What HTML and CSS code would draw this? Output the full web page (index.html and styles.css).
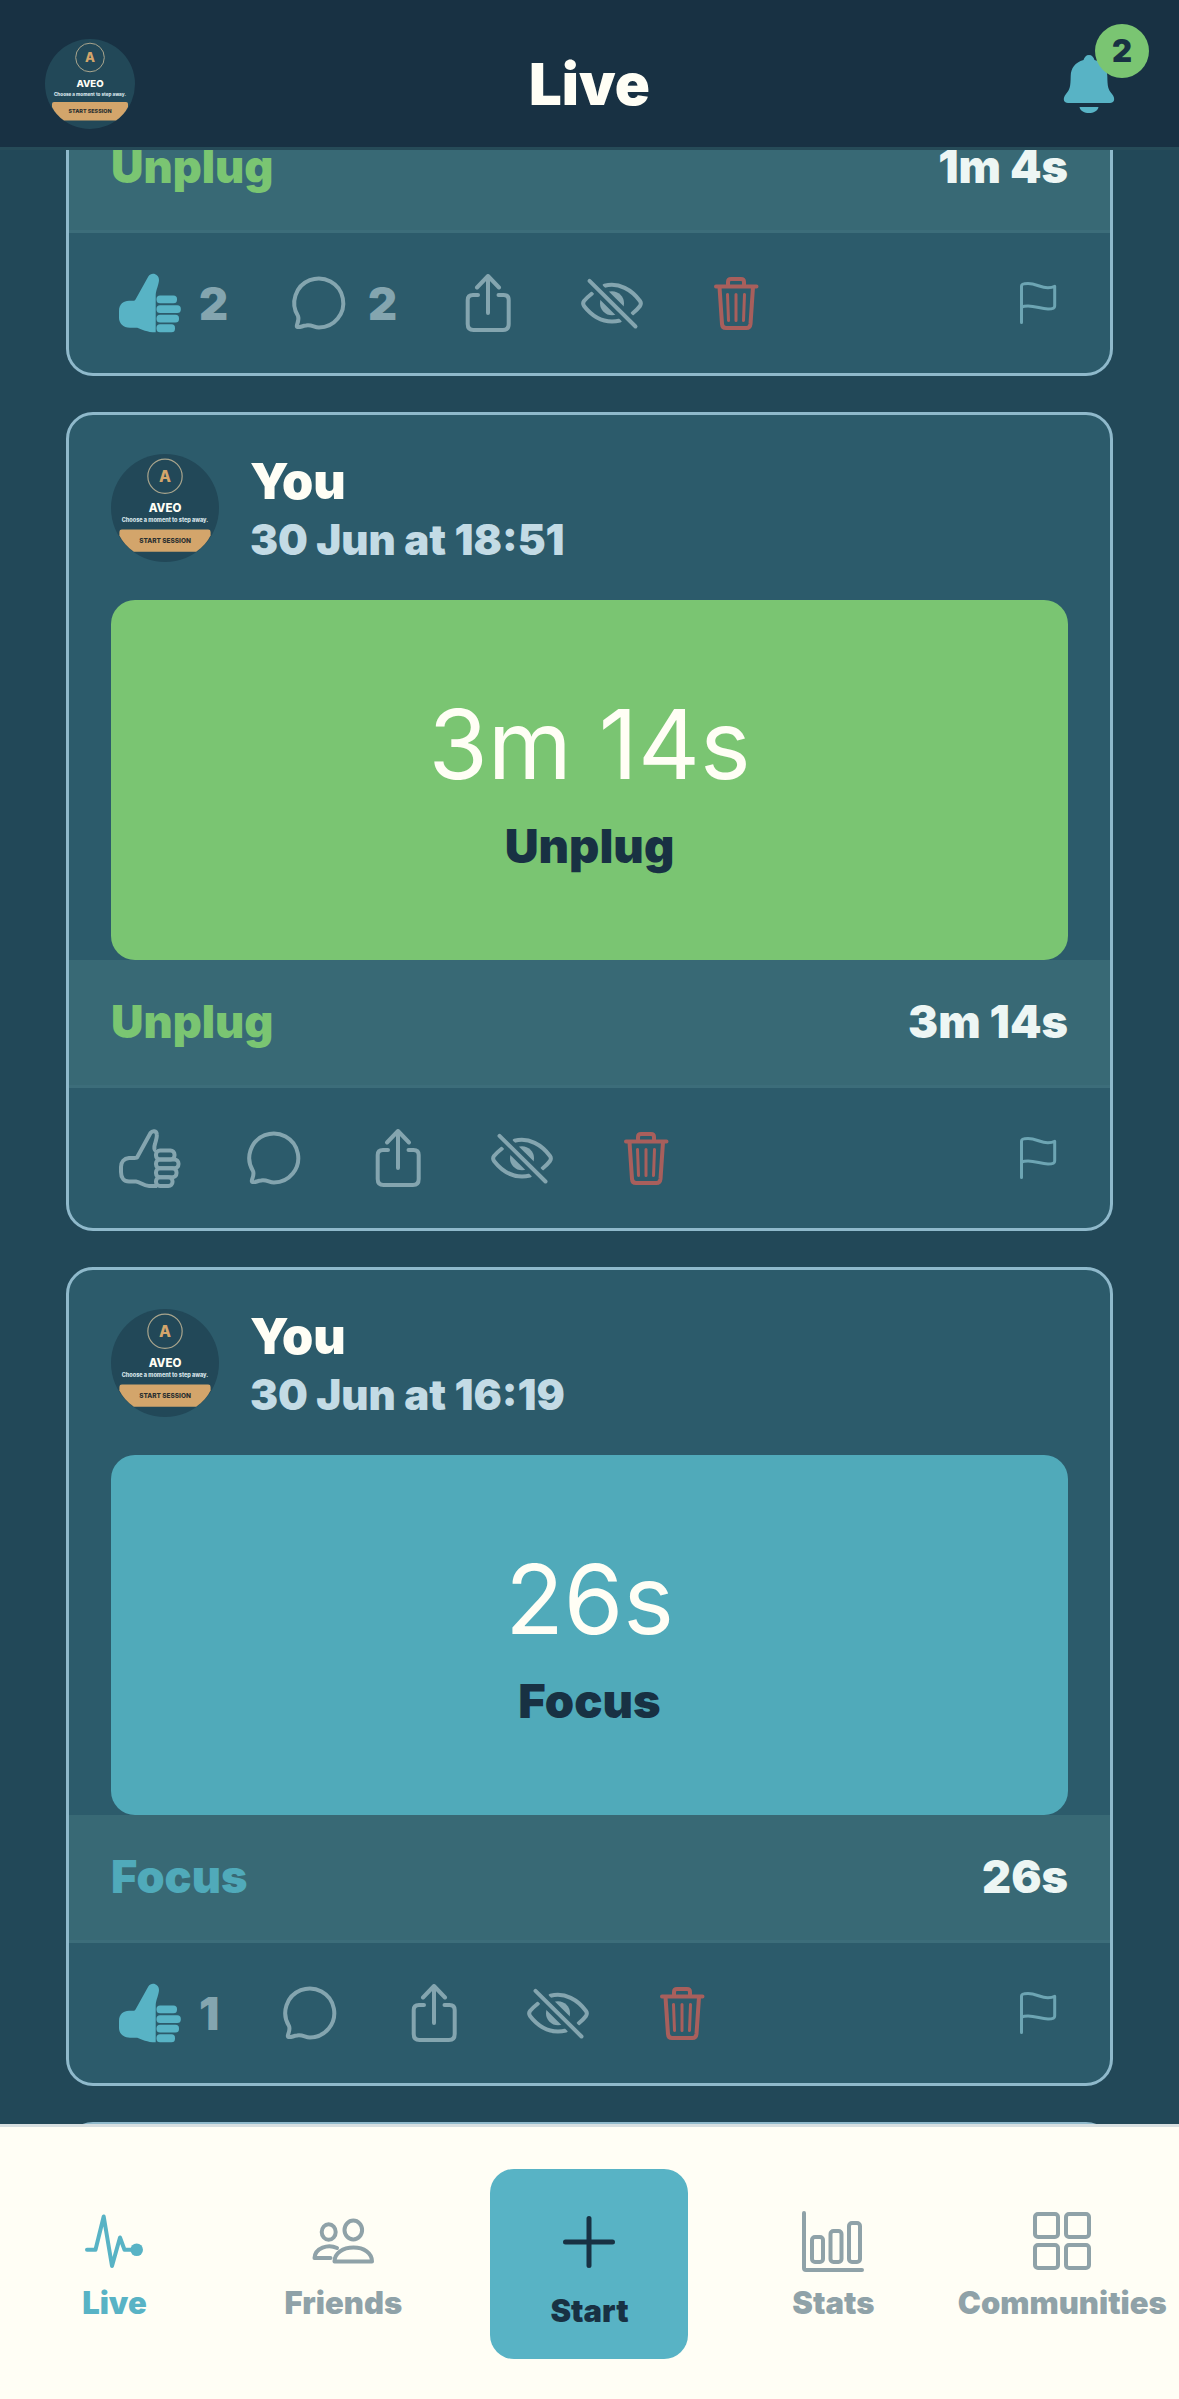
FILE: index.html
```html
<!DOCTYPE html>
<html lang="en">
<head>
  <meta charset="UTF-8" />
  <meta name="viewport" content="width=device-width, initial-scale=1.0"/>
  <title>Aveo – Live</title>
  <link rel="stylesheet" href="styles.css">
</head>
<body>

  <!-- Icons -->
  <svg class="sprite" aria-hidden="true">
    <symbol id="i-like-on" viewBox="0 0 66 66">
      <path fill="currentColor" d="M31.300 6.500C34.500 1.500 42 4 42 10C42 14 39 20 38.700 25V62.300C30 62.300 25 59.500 20.300 57.700H13C6 57.700 2 53 2 48V41C2 34 6.500 30.700 12 30.700H16C17.500 30.700 18 30.500 18.500 29.500Z"/>
      <rect x="39.500" y="25.500" width="20.500" height="7.800" rx="3.500" fill="currentColor"/>
      <rect x="39.500" y="35.200" width="24.300" height="7.800" rx="3.500" fill="currentColor"/>
      <rect x="39.500" y="44.800" width="22.500" height="7.800" rx="3.500" fill="currentColor"/>
      <rect x="39.500" y="54.200" width="18.500" height="8" rx="3.500" fill="currentColor"/>
    </symbol>
    <symbol id="i-like" viewBox="0 0 66 66">
      <g fill="none" stroke="currentColor" stroke-width="4" stroke-linejoin="round">
        <path d="M39 25.500C37 25 37 22 38 19C39.500 14 40 11 39.800 9.500C39.500 5.500 35.500 5.300 33.500 8L20 32.500C19 33.300 15 33 12 33C7 33.500 4 37 4 42V47C4 53 7 56.500 12 56.500H19C23 57 27 61 32 61H40"/>
        <rect x="39" y="25.500" width="18.500" height="8.900" rx="4"/>
        <rect x="39" y="34.400" width="22.500" height="8.900" rx="4"/>
        <rect x="39" y="43.300" width="20.500" height="8.900" rx="4"/>
        <rect x="39" y="52.200" width="16.500" height="8.900" rx="4"/>
      </g>
    </symbol>
    <symbol id="i-comment" viewBox="0 0 66 66">
      <path fill="none" stroke="currentColor" stroke-width="4" stroke-linejoin="round" d="M12 46A24.500 24.500 0 1 1 33 57.500C28 57.500 26 54.500 20 55.500C16 56 13 58 11 56.800C9.500 55.500 14 51 12 46Z"/>
    </symbol>
    <symbol id="i-share" viewBox="0 0 66 66">
      <path fill="none" stroke="currentColor" stroke-width="4" stroke-linecap="round" stroke-linejoin="round" d="M33 43V6M22 17.500L33 6L44 17.500M23 25H18Q12.700 25 12.700 30V54Q12.700 60 18.500 60H48Q53.700 60 53.700 54V30Q53.700 25 48.500 25H43.500"/>
    </symbol>
    <symbol id="i-hide" viewBox="0 0 66 66">
      <path fill="none" stroke="currentColor" stroke-width="4" stroke-linecap="round" stroke-linejoin="round" d="M13 23.500Q8.500 27 5 31Q3.300 33.300 5 36C12 45 22 51.500 33 51.500Q37 51.500 41 50.500M25.500 15.800C40 12 53 20 61 31Q62.700 33.300 61 36Q58 40 53.500 43.500"/>
      <circle cx="33" cy="33.300" r="12" fill="currentColor"/>
      <path stroke="#2c5b6b" stroke-width="12" d="M14 14.300L53 53"/>
      <path stroke="currentColor" stroke-width="4" stroke-linecap="round" d="M10.500 10.800L56.500 56.500"/>
    </symbol>
    <symbol id="i-trash" viewBox="0 0 66 66">
      <g fill="none" stroke="currentColor" stroke-width="4" stroke-linecap="round" stroke-linejoin="round">
        <path d="M13 16.500H53.500M25 16V12Q25 9 28 9H38Q41 9 41 12V16M16.500 17L19 54Q19.300 58 23 58H43.500Q47 58 47.500 54L50 17"/>
        <path stroke-width="3" d="M24.500 24.500L25.500 50.500M33 24.500V50.500M41.500 24.500L40.500 50.500"/>
      </g>
    </symbol>
    <symbol id="i-flag" viewBox="0 0 60 60">
      <path fill="none" stroke="currentColor" stroke-width="3" stroke-linecap="round" stroke-linejoin="round" d="M13.500 49.500V13Q13.500 10.500 20 10.500C28 10.500 33 15 40 14.800Q44 14.500 46.700 13.300V33Q46.700 36 40 36C33 36 28 33 20 33Q16 33 13.500 34"/>
    </symbol>
    <symbol id="i-bell" viewBox="0 0 60 66">
      <path fill="currentColor" d="M30 4C33 4 34.500 6 35.500 9C44 11.500 48 17 48.300 25C48.500 36 49 38 53 43C57 48 55 52 51 52H9C5 52 3 48 7 43C11 38 11.500 36 11.700 25C12 17 16 11.500 24.500 9C25.500 6 27 4 30 4ZM20.500 56H39.500C38 64 22 64 20.500 56Z"/>
    </symbol>
    <symbol id="i-live" viewBox="0 0 66 66">
      <path fill="none" stroke="currentColor" stroke-width="4" stroke-linecap="round" stroke-linejoin="round" d="M6 41.700H14.500L22.700 8.500L31 58L39 29.500L43.500 41.700H56"/>
      <circle cx="55.700" cy="41.700" r="6.300" fill="currentColor"/>
    </symbol>
    <symbol id="i-friends" viewBox="0 0 66 66">
      <g fill="none" stroke="currentColor" stroke-width="4" stroke-linecap="round" stroke-linejoin="round">
        <ellipse cx="18.700" cy="24" rx="7" ry="7.800"/>
        <ellipse cx="43.300" cy="22" rx="8.800" ry="9.500"/>
        <path d="M24.500 53.500C24.500 45 33 39.500 43.500 39.500S62 45 62 53.500Z"/>
        <path d="M27 40C18 35.500 5 40 4.500 50H20.500"/>
      </g>
    </symbol>
    <symbol id="i-plus" viewBox="0 0 66 66">
      <path stroke="currentColor" stroke-width="5" stroke-linecap="round" d="M33 9.500V56.500M9.500 33H56.500"/>
    </symbol>
    <symbol id="i-stats" viewBox="0 0 66 66">
      <g fill="none" stroke="currentColor" stroke-width="4" stroke-linecap="round" stroke-linejoin="round">
        <path d="M4 5V60Q4 62 6 62H62"/>
        <rect x="12" y="29" width="11" height="25" rx="3"/>
        <rect x="30.500" y="23" width="11" height="31" rx="3"/>
        <rect x="49" y="15" width="11" height="39" rx="3"/>
      </g>
    </symbol>
    <symbol id="i-grid" viewBox="0 0 66 66">
      <g fill="none" stroke="currentColor" stroke-width="4">
        <rect x="6" y="6" width="23" height="23" rx="3"/>
        <rect x="37" y="6" width="23" height="23" rx="3"/>
        <rect x="6" y="37" width="23" height="23" rx="3"/>
        <rect x="37" y="37" width="23" height="23" rx="3"/>
      </g>
    </symbol>
  </svg>

  <header class="topbar">
    <button class="profile" aria-label="Profile">
      <svg class="avatar avatar-small" viewBox="0 0 90 90">
        <circle cx="45" cy="45" r="45" fill="#224858"/>
        <circle cx="45" cy="18.5" r="14.3" fill="none" stroke="#a9a58d"/>
        <text x="45" y="23.3" font-size="13" fill="#d3a56b">A</text>
        <text x="45" y="48" font-size="9.6" fill="#fffef5">AVEO</text>
        <text x="45" y="57" font-size="4.6" fill="#d5e3e8">Choose a moment to step away.</text>
        <path d="M9 63H81Q83 63 83 65V68Q79 76 71 81.5H19Q11 76 7 68V65Q7 63 9 63Z" fill="#d3a56b"/>
        <text x="45" y="74.3" font-size="5.4" fill="#2a2f30">START SESSION</text>
      </svg>
    </button>
    <h1>Live</h1>
    <button class="bell" aria-label="Notifications">
      <svg><use href="#i-bell"/></svg>
      <span class="badge">2</span>
    </button>
  </header>

  <main class="feed">
    <!-- scrolled partly under the top bar -->
    <article class="card card-cut">
      <div class="info">
        <span class="unplug">Unplug</span>
        <span>1m 4s</span>
      </div>
      <div class="actions">
        <button class="liked" aria-label="Like"><svg><use href="#i-like-on"/></svg><span>2</span></button>
        <button aria-label="Comment"><svg><use href="#i-comment"/></svg><span>2</span></button>
        <button aria-label="Share"><svg><use href="#i-share"/></svg></button>
        <button aria-label="Hide"><svg><use href="#i-hide"/></svg></button>
        <button class="delete" aria-label="Delete"><svg><use href="#i-trash"/></svg></button>
        <button class="flag" aria-label="Report"><svg><use href="#i-flag"/></svg></button>
      </div>
    </article>

    <article class="card">
      <div class="card-head">
        <svg class="avatar" viewBox="0 0 90 90">
          <circle cx="45" cy="45" r="45" fill="#224858"/>
          <circle cx="45" cy="18.5" r="14.3" fill="none" stroke="#a9a58d"/>
          <text x="45" y="23.3" font-size="13" fill="#d3a56b">A</text>
          <text x="45" y="48" font-size="9.6" fill="#fffef5">AVEO</text>
          <text x="45" y="57" font-size="4.6" fill="#d5e3e8">Choose a moment to step away.</text>
          <path d="M9 63H81Q83 63 83 65V68Q79 76 71 81.5H19Q11 76 7 68V65Q7 63 9 63Z" fill="#d3a56b"/>
          <text x="45" y="74.3" font-size="5.4" fill="#2a2f30">START SESSION</text>
        </svg>
        <div>
          <h2>You</h2>
          <time>30 Jun at 18:51</time>
        </div>
      </div>
      <div class="hero hero-unplug">
        <p class="duration">3m 14s</p>
        <p class="mode">Unplug</p>
      </div>
      <div class="info">
        <span class="unplug">Unplug</span>
        <span>3m 14s</span>
      </div>
      <div class="actions">
        <button aria-label="Like"><svg><use href="#i-like"/></svg></button>
        <button aria-label="Comment"><svg><use href="#i-comment"/></svg></button>
        <button aria-label="Share"><svg><use href="#i-share"/></svg></button>
        <button aria-label="Hide"><svg><use href="#i-hide"/></svg></button>
        <button class="delete" aria-label="Delete"><svg><use href="#i-trash"/></svg></button>
        <button class="flag" aria-label="Report"><svg><use href="#i-flag"/></svg></button>
      </div>
    </article>

    <article class="card">
      <div class="card-head">
        <svg class="avatar" viewBox="0 0 90 90">
          <circle cx="45" cy="45" r="45" fill="#224858"/>
          <circle cx="45" cy="18.5" r="14.3" fill="none" stroke="#a9a58d"/>
          <text x="45" y="23.3" font-size="13" fill="#d3a56b">A</text>
          <text x="45" y="48" font-size="9.6" fill="#fffef5">AVEO</text>
          <text x="45" y="57" font-size="4.6" fill="#d5e3e8">Choose a moment to step away.</text>
          <path d="M9 63H81Q83 63 83 65V68Q79 76 71 81.5H19Q11 76 7 68V65Q7 63 9 63Z" fill="#d3a56b"/>
          <text x="45" y="74.3" font-size="5.4" fill="#2a2f30">START SESSION</text>
        </svg>
        <div>
          <h2>You</h2>
          <time>30 Jun at 16:19</time>
        </div>
      </div>
      <div class="hero hero-focus">
        <p class="duration">26s</p>
        <p class="mode">Focus</p>
      </div>
      <div class="info">
        <span class="focus">Focus</span>
        <span>26s</span>
      </div>
      <div class="actions">
        <button class="liked" aria-label="Like"><svg><use href="#i-like-on"/></svg><span>1</span></button>
        <button aria-label="Comment"><svg><use href="#i-comment"/></svg></button>
        <button aria-label="Share"><svg><use href="#i-share"/></svg></button>
        <button aria-label="Hide"><svg><use href="#i-hide"/></svg></button>
        <button class="delete" aria-label="Delete"><svg><use href="#i-trash"/></svg></button>
        <button class="flag" aria-label="Report"><svg><use href="#i-flag"/></svg></button>
      </div>
    </article>

    <article class="card card-next"></article>
  </main>

  <nav class="tabbar">
    <a href="#live" class="tab active"><svg><use href="#i-live"/></svg>Live</a>
    <a href="#friends" class="tab"><svg><use href="#i-friends"/></svg>Friends</a>
    <button class="start"><svg><use href="#i-plus"/></svg>Start</button>
    <a href="#stats" class="tab"><svg><use href="#i-stats"/></svg>Stats</a>
    <a href="#communities" class="tab"><svg><use href="#i-grid"/></svg>Communities</a>
  </nav>

</body>
</html>
```

FILE: styles.css
```css
:root {
  --navy: #183143;
  --bg: #224858;
  --card: #2c5b6b;
  --info: #386975;
  --line: #3c6d7a;
  --border: #8fb9cb;
  --cream: #fffef5;
  --green: #7ac572;
  --blue: #58b3c5;
  --focus: #50aaba;
  --muted: #84a5af;
}

* {
  box-sizing: border-box;
}

body {
  margin: 0;
  height: 100vh;
  display: flex;
  flex-direction: column;
  overflow: hidden;
  background: var(--bg);
  color: var(--cream);
  font-family: Inter, "Liberation Sans", sans-serif;
  font-weight: 900;
}

h1, h2, p {
  margin: 0;
}

button {
  font: inherit;
  color: inherit;
  background: none;
  border: none;
  padding: 0;
  cursor: pointer;
}

svg {
  display: block;
  flex: none;
}

.sprite {
  position: absolute;
  width: 0;
  height: 0;
}

/* Top bar */
.topbar {
  display: grid;
  grid-template-columns: 1fr auto 1fr;
  align-items: center;
  padding: 39px 45px 18px;
  background: var(--navy);
  border-bottom: 3px solid #264b58;
}

.avatar {
  width: 108px;
  height: 108px;
}

.avatar-small {
  width: 90px;
  height: 90px;
}

.avatar text {
  text-anchor: middle;
  font-weight: 800;
}

.profile {
  justify-self: start;
}

h1 {
  font-size: 58px;
  line-height: 66px;
  font-weight: 900;
}

.bell {
  position: relative;
  justify-self: end;
  margin-right: 15px;
  color: var(--blue);
}

.bell svg {
  width: 60px;
  height: 66px;
}

.badge {
  position: absolute;
  top: -27px;
  right: -30px;
  width: 54px;
  height: 54px;
  border-radius: 50%;
  background: var(--green);
  color: var(--navy);
  font-size: 31px;
  line-height: 54px;
  text-align: center;
}

/* Feed */
.feed {
  flex: 1;
  min-height: 0;
  overflow: hidden;
  padding: 0 66px;
}

.card {
  margin-bottom: 36px;
  border: 3px solid var(--border);
  border-radius: 27px;
  background: var(--card);
}

.card-cut {
  margin-top: -45px;
  border-top: none;
  border-top-left-radius: 0;
  border-top-right-radius: 0;
}

.card-next {
  height: 200px;
}

.card-head {
  display: flex;
  align-items: flex-start;
  gap: 31px;
  padding: 39px 42px 28px;
}

h2 {
  font-size: 50px;
  line-height: 54px;
  font-weight: 900;
}

time {
  display: block;
  font-size: 42px;
  line-height: 64px;
  color: #c3dbe5;
}

.hero {
  display: flex;
  flex-direction: column;
  align-items: center;
  justify-content: center;
  height: 360px;
  margin: 0 42px;
  border-radius: 24px;
}

.hero-unplug {
  background: var(--green);
}

.hero-focus {
  background: var(--focus);
}

.duration {
  font-size: 96px;
  line-height: 120px;
  font-weight: 400;
}

.mode {
  font-size: 47px;
  line-height: 60px;
  margin-top: 12px;
  color: var(--navy);
}

.info {
  display: flex;
  justify-content: space-between;
  padding: 35px 42px 36px;
  background: var(--info);
  border-bottom: 3px solid var(--line);
  font-size: 45px;
  line-height: 54px;
  color: #edf6f4;
}

.unplug {
  color: var(--green);
}

.focus {
  color: var(--focus);
}

.actions {
  display: flex;
  align-items: center;
  gap: 46px;
  height: 140px;
  padding: 0 42px;
  color: var(--muted);
}

.actions button {
  display: flex;
  align-items: center;
  gap: 16px;
  padding: 0 6px;
  font-size: 45px;
}

.actions svg {
  width: 66px;
  height: 66px;
}

.liked svg {
  color: var(--blue);
}

.actions .delete {
  color: #a85f5c;
}

.actions .flag {
  margin-left: auto;
  padding: 0;
  color: #6da5b3;
}

.flag svg {
  width: 60px;
  height: 60px;
}

/* Bottom tabs */
.tabbar {
  display: grid;
  grid-template-columns: 1fr 1fr 1.15fr 0.98fr 1.02fr;
  align-items: center;
  justify-items: center;
  padding: 42px 0 40px;
  background: var(--cream);
  border-top: 3px solid #d7dfe0;
  font-size: 31px;
  line-height: 36px;
}

.tabbar svg {
  width: 66px;
  height: 66px;
}

.tab {
  display: flex;
  flex-direction: column;
  align-items: center;
  gap: 11px;
  color: #8fa2a8;
  text-decoration: none;
}

.tab.active {
  color: var(--blue);
}

.start {
  display: flex;
  flex-direction: column;
  align-items: center;
  justify-content: center;
  gap: 18px;
  width: 198px;
  height: 190px;
  padding-top: 10px;
  border-radius: 24px;
  background: var(--blue);
  color: var(--navy);
}
```
